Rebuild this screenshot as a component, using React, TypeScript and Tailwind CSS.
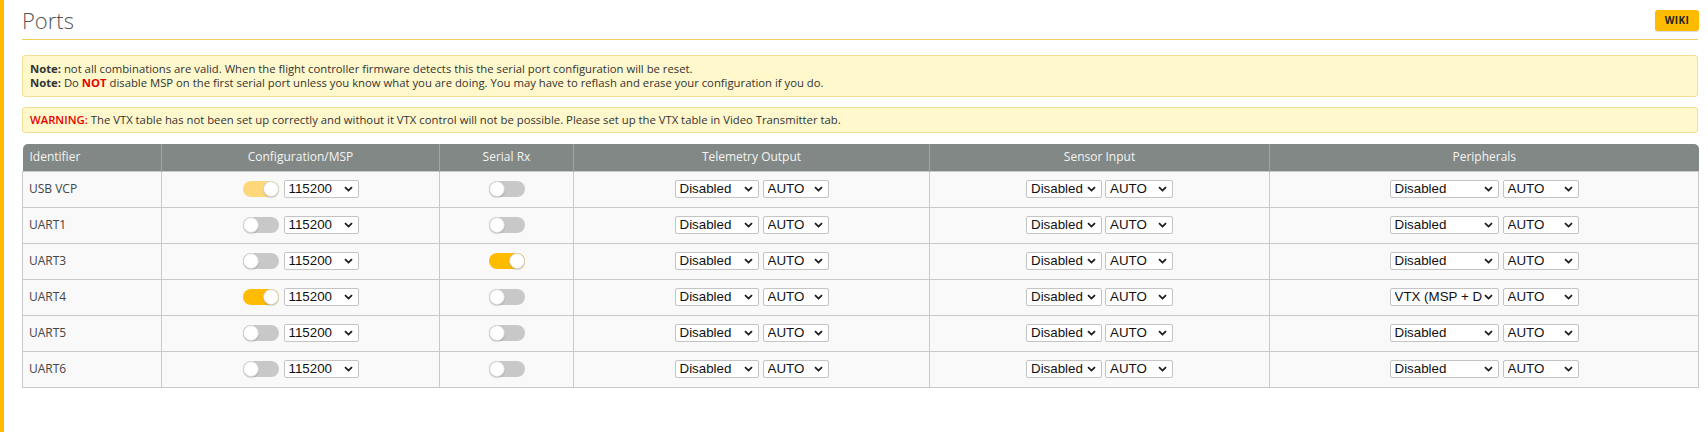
import React from 'react';

type Port = {
  id: string;
  msp: boolean;
  mspLocked?: boolean;
  rx: boolean;
  peripheral: string;
};

const ports: Port[] = [
  { id: 'USB VCP', msp: true, mspLocked: true, rx: false, peripheral: 'Disabled' },
  { id: 'UART1', msp: false, rx: false, peripheral: 'Disabled' },
  { id: 'UART3', msp: false, rx: true, peripheral: 'Disabled' },
  { id: 'UART4', msp: true, rx: false, peripheral: 'VTX (MSP + D' },
  { id: 'UART5', msp: false, rx: false, peripheral: 'Disabled' },
  { id: 'UART6', msp: false, rx: false, peripheral: 'Disabled' },
];

function Toggle({ on, locked }: { on: boolean; locked?: boolean }) {
  const track = on ? (locked ? 'bg-[#fdd77a]' : 'bg-[#ffbb00]') : 'bg-[#c8c8c8]';
  return (
    <span className={`inline-flex h-[16px] w-[36px] rounded-full ${track} ${on ? 'justify-end' : 'justify-start'}`}>
      <span className="h-[16px] w-[16px] rounded-full bg-white border border-[#d6d6d6] shadow-[0_1px_1px_rgba(0,0,0,0.15)]" />
    </span>
  );
}

function Chevron() {
  return (
    <svg width="9" height="6" viewBox="0 0 9 6" className="shrink-0">
      <path d="M1 1.2 L4.5 4.6 L8 1.2" fill="none" stroke="#1a1a1a" strokeWidth="1.8" />
    </svg>
  );
}

function FakeSelect({ value, width }: { value: string; width: string }) {
  return (
    <span
      className={`inline-flex h-[18px] ${width} items-center justify-between rounded-[2px] border border-[#c4c4c4] bg-white pl-[4px] pr-[5px] font-['Liberation_Sans',Arial,sans-serif] text-[13.33px] leading-none text-[#111] overflow-hidden whitespace-nowrap`}
    >
      <span className="overflow-hidden">{value}</span>
      <Chevron />
    </span>
  );
}

export default function App() {
  return (
    <div className="min-h-[432px] w-[1708px] bg-white border-l-4 border-[#ffbb00] pl-[18px] pr-[10px] font-['Open_Sans',sans-serif] text-[#333]">
      <div className="flex h-[40px] items-start justify-between border-b border-[#f3cf5a]">
        <h1 className="mt-[6px] text-[22px] font-light leading-[28px] text-[#555]">Ports</h1>
        <span className="mt-[10px] mr-[-1px] inline-flex h-[21px] w-[44px] items-center justify-center rounded-[3px] bg-[#ffbb00] text-[10px] font-bold tracking-[0.4px] text-[#222] shadow-[0_1px_1px_rgba(0,0,0,0.15)]">
          WIKI
        </span>
      </div>

      <div className="mt-[15px] rounded-[3px] border border-[#f3df8f] bg-[#fff8cc] px-[7px] py-[6px] text-[11.3px] leading-[14px] text-[#333]">
        <p>
          <b>Note:</b> not all combinations are valid. When the flight controller firmware detects this the serial port configuration will be reset.
        </p>
        <p>
          <b>Note:</b> Do <b className="text-[#e60000]">NOT</b> disable MSP on the first serial port unless you know what you are doing. You may have to reflash and erase your configuration if you do.
        </p>
      </div>

      <div className="mt-[10px] rounded-[3px] border border-[#f3df8f] bg-[#fff8cc] px-[7px] py-[5px] text-[11.3px] leading-[14px] text-[#333]">
        <b className="font-semibold text-[#e60000]">WARNING:</b> The VTX table has not been set up correctly and without it VTX control will not be possible. Please set up the VTX table in Video Transmitter tab.
      </div>

      <table className="mt-[11px] w-[1676px] table-fixed border-collapse text-[12px]">
        <colgroup>
          <col className="w-[139px]" />
          <col className="w-[278px]" />
          <col className="w-[134px]" />
          <col className="w-[356px]" />
          <col className="w-[340px]" />
          <col className="w-[429px]" />
        </colgroup>
        <thead>
          <tr className="h-[27px] bg-[#828885] text-[#f4f4f4]">
            <th className="rounded-tl-[5px] pl-[7px] text-left font-normal">Identifier</th>
            <th className="border-l border-[#a2a6a4] font-normal">Configuration/MSP</th>
            <th className="border-l border-[#a2a6a4] font-normal">Serial Rx</th>
            <th className="border-l border-[#a2a6a4] font-normal">Telemetry Output</th>
            <th className="border-l border-[#a2a6a4] font-normal">Sensor Input</th>
            <th className="rounded-tr-[5px] border-l border-[#a2a6a4] font-normal">Peripherals</th>
          </tr>
        </thead>
        <tbody className="bg-[#f9f9f9]">
          {ports.map((p) => (
            <tr key={p.id} className="h-[36px] border border-[#c9c9c9]">
              <td className="border border-[#c9c9c9] pl-[6px] text-[#444]">{p.id}</td>
              <td className="border border-[#c9c9c9]">
                <div className="flex items-center justify-center gap-[5px]">
                  <Toggle on={p.msp} locked={p.mspLocked} />
                  <FakeSelect value="115200" width="w-[75px]" />
                </div>
              </td>
              <td className="border border-[#c9c9c9]">
                <div className="flex justify-center">
                  <Toggle on={p.rx} />
                </div>
              </td>
              <td className="border border-[#c9c9c9]">
                <div className="flex items-center justify-center gap-[4px]">
                  <FakeSelect value="Disabled" width="w-[84px]" />
                  <FakeSelect value="AUTO" width="w-[66px]" />
                </div>
              </td>
              <td className="border border-[#c9c9c9]">
                <div className="flex items-center justify-center gap-[3px]">
                  <FakeSelect value="Disabled" width="w-[76px]" />
                  <FakeSelect value="AUTO" width="w-[68px]" />
                </div>
              </td>
              <td className="border border-[#c9c9c9]">
                <div className="flex items-center justify-center gap-[4px]">
                  <FakeSelect value={p.peripheral} width="w-[109px]" />
                  <FakeSelect value="AUTO" width="w-[76px]" />
                </div>
              </td>
            </tr>
          ))}
        </tbody>
      </table>
    </div>
  );
}
